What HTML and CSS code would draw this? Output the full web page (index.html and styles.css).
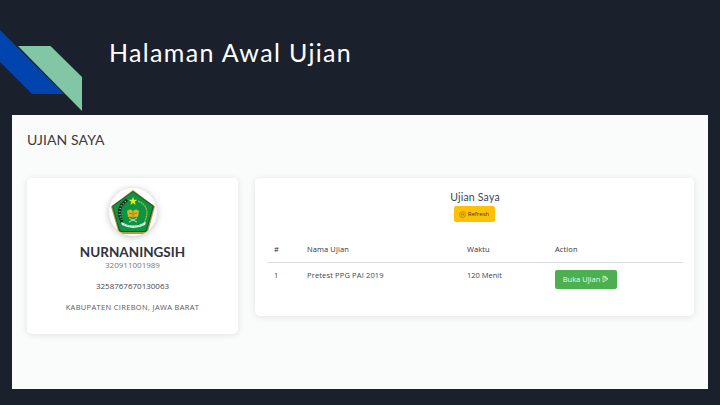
FILE: index.html
```
<!DOCTYPE html>
<html lang="id">
<head>
  <meta charset="UTF-8" />
  <meta name="viewport" content="width=device-width, initial-scale=1.0" />
  <title>Halaman Awal Ujian</title>
  <link rel="stylesheet" href="styles.css">
</head>
<body>
  <header>
    <svg class="ribbon" width="84" height="112" viewBox="0 0 84 112">
      <path d="M18 46h32.500L82 77v34z" fill="#82c7a5" />
      <path d="M0 30l64 64H32L0 62z" fill="#0045ad" />
    </svg>
    <h1>Halaman Awal Ujian</h1>
  </header>
  <main>
    <h2>UJIAN SAYA</h2>
    <div class="row">
      <section class="card profile">
        <svg class="logo" width="48" height="48" viewBox="0 0 48 48">
          <path d="M24 2L46 18.500 39 44 Q38 46 36 46H13Q10 46 9 43L2 18.500z" fill="#b59a3c" />
          <path d="M24 3L45 18 38 42.500Q37.500 44 35.500 44H13Q10.500 44 10 42.500L3 18z" fill="#1d5a30" />
          <path d="M24 4L43.500 18.500 37 41.500Q36.500 43 34.500 43H13.500Q11.500 43 11 41.500L4 18.500z" fill="#0b9444" />
          <path d="M18 12Q6 20 13 34" fill="none" stroke="#10271a" stroke-width="3.200" stroke-dasharray="2.200 .7" />
          <path d="M17 13Q7 21 13 32" fill="none" stroke="#d7e6d4" stroke-width="1" stroke-dasharray="1 2" />
          <path d="M29 13Q43 19 35 35" fill="none" stroke="#c1b82b" stroke-width="1.200" stroke-dasharray="2 .7" />
          <path d="M24 8.500l1 3.200h3.400l-2.700 2 1 3.200-2.700-2-2.700 2 1-3.200-2.700-2H23z" fill="#f2e526" />
          <path d="M18 23q3-3 6 0 3-3 6 0l-1 6q-3-1-5 1-2-2-5-1z" fill="#d9b51e" />
          <path d="M24 23v7M20 25l3 1M28 25l-3 1" stroke="#7c7419" stroke-width=".7" />
          <path d="M20 34l8-4M20 30l8 4" stroke="#d8d9a7" stroke-width="1" />
          <path d="M12 34q12 7 25 0l-1 3q-12 6-23 0z" fill="#e9f4e9" />
          <path d="M15 36.500q9 3.500 19 0" fill="none" stroke="#5c9b72" stroke-width=".7" stroke-dasharray="1 .7" />
        </svg>
        <h3>NURNANINGSIH</h3>
        <p class="number">320911001989</p>
        <p class="nuptk">3258767670130063</p>
        <p class="region">KABUPATEN CIREBON, JAWA BARAT</p>
      </section>
      <section class="card exams">
        <h4>Ujian Saya</h4>
        <button class="btn refresh">
          <svg width="7" height="7" viewBox="0 0 14 14" fill="none" stroke="#8b6b12">
            <circle cx="7" cy="7" r="6" />
            <path d="M4.500 9.500V6a2.500 2.500 0 0 1 5 0v3.500M4 7.500h6M7 10v1" />
          </svg>
          <span>Refresh</span>
        </button>
        <table>
          <thead>
            <tr><th class="no">#</th><th class="name">Nama Ujian</th><th class="time">Waktu</th><th>Action</th></tr>
          </thead>
          <tbody>
            <tr>
              <td>1</td>
              <td class="exam">Pretest PPG PAI 2019</td>
              <td>120 Menit</td>
              <td class="action">
                <button class="btn open">
                  <span>Buka Ujian</span>
                  <svg width="7" height="8" viewBox="0 0 7 9" fill="none" stroke="#d7f3d9" stroke-width=".9">
                    <path d="M.7 1v7L6.300 4.500 3 1v4.500M.7 1l5 3.500" />
                  </svg>
                </button>
              </td>
            </tr>
          </tbody>
        </table>
      </section>
    </div>
  </main>
</body>
</html>
```

FILE: styles.css
```
* {
  box-sizing: border-box;
}
body {
  margin: 0;
  height: 405px;
  overflow: hidden;
  background-color: #1b212c;
  font-family: "Open Sans", "Noto Sans", sans-serif;
  color: #41454f;
}
h1, h2, h3, h4, p {
  margin: 0;
  white-space: nowrap;
}
header {
  display: flex;
  height: 115px;
}
.ribbon {
  flex: none;
}
h1 {
  margin: 36px 0 0 25px;
  font-family: Lato, sans-serif;
  font-size: 25px;
  line-height: 32px;
  font-weight: 400;
  letter-spacing: 1.350px;
  color: #fff;
}
main {
  width: 696px;
  height: 274px;
  margin-left: 12px;
  padding: 16px 14px 0 15px;
  background-color: #fafcfb;
}
h2 {
  font-family: Lato, sans-serif;
  font-size: 14px;
  line-height: 18px;
  font-weight: 400;
  letter-spacing: 0.1px;
  color: #3c3a40;
}
.row {
  display: flex;
  align-items: flex-start;
  gap: 17px;
  margin-top: 29px;
}
.card {
  display: flex;
  flex-direction: column;
  align-items: center;
  background-color: #fff;
  border-radius: 5px;
  box-shadow: 0 1px 6px rgba(40, 50, 50, 0.12);
}
.profile {
  width: 211px;
  height: 156px;
  padding-top: 10px;
}
.logo {
  border-radius: 50%;
  background-color: #fff;
  box-shadow: 0 1px 7px rgba(0, 0, 0, 0.25);
}
h3 {
  margin-top: 7px;
  font-family: Lato, sans-serif;
  font-size: 13.500px;
  line-height: 18px;
  font-weight: 700;
  color: #30323c;
}
.number {
  margin-top: -1px;
  font-size: 8px;
  line-height: 10px;
  color: #73777f;
}
.nuptk {
  margin-top: 11px;
  font-size: 8px;
  line-height: 10px;
}
.region {
  margin-top: 11px;
  font-size: 7.500px;
  line-height: 10px;
  letter-spacing: 0.330px;
  color: #555963;
}
.exams {
  width: 439px;
  height: 138px;
  padding: 12px 11px 0 12px;
}
h4 {
  font-family: Lato, sans-serif;
  font-size: 10.500px;
  line-height: 15px;
  font-weight: 400;
  letter-spacing: 0.200px;
  color: #34465a;
}
.btn {
  display: flex;
  align-items: center;
  justify-content: center;
  border: none;
  border-radius: 2px;
  padding: 0;
  font-family: inherit;
}
.refresh {
  width: 41px;
  height: 16px;
  margin-top: 1px;
  margin-right: 2px;
  gap: 2px;
  background-color: #ffc107;
  font-size: 6px;
  color: #3f3510;
}
table {
  width: 100%;
  margin-top: 22px;
  border-collapse: collapse;
  table-layout: fixed;
  text-align: left;
  font-size: 7.500px;
  line-height: 10px;
}
th, td {
  padding: 0 0 0 7px;
  vertical-align: top;
  white-space: nowrap;
}
th {
  height: 18px;
  font-weight: 500;
  letter-spacing: 0.100px;
  color: #30343e;
}
td {
  border-top: 1px solid #d9dde2;
  padding-top: 7px;
}
.no {
  width: 33px;
}
.name {
  width: 160px;
}
.time {
  width: 88px;
}
.exam {
  letter-spacing: 0.150px;
}
.open {
  width: 62px;
  height: 19px;
  gap: 2px;
  background-color: #4caf50;
  font-size: 7.500px;
  color: #e8fbe9;
}
```
